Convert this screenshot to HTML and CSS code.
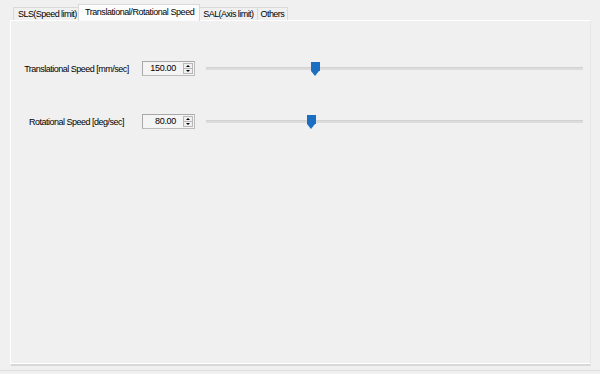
FILE: index.html
```html
<!DOCTYPE html>
<html>
<head>
<meta charset="utf-8">
<link rel="stylesheet" href="styles.css">
</head>
<body>
<div class="window">
  <div class="tabs">
    <div class="tab">SLS(Speed limit)</div>
    <div class="tab active">Translational/Rotational Speed</div>
    <div class="tab">SAL(Axis limit)</div>
    <div class="tab">Others</div>
  </div>
  <div class="panel">
    <div class="row">
      <div class="label">Translational Speed [mm/sec]</div>
      <div class="spin">
        <div class="value">150.00</div>
        <div class="btns"><span class="up"></span><span class="down"></span></div>
      </div>
      <div class="slider">
        <div class="track"></div>
        <div class="thumb" style="left: 105px"></div>
      </div>
    </div>
    <div class="row">
      <div class="label">Rotational Speed [deg/sec]</div>
      <div class="spin">
        <div class="value">80.00</div>
        <div class="btns"><span class="up"></span><span class="down"></span></div>
      </div>
      <div class="slider">
        <div class="track"></div>
        <div class="thumb" style="left: 101px"></div>
      </div>
    </div>
  </div>
</div>
<div class="statusline"></div>
</body>
</html>
```
FILE: styles.css
```css
html, body {
  margin: 0;
  padding: 0;
  background: #f0f0f0;
  font-family: "Liberation Sans", Arial, sans-serif;
  font-size: 9px;
  color: #000;
}
.window {
  width: 600px;
  height: 370px;
  padding-left: 10px;
  padding-right: 9px;
  box-sizing: border-box;
  display: flex;
  flex-direction: column;
}
.tabs {
  display: flex;
  align-items: flex-end;
  height: 20px;
  padding-left: 3px;
}
.tab {
  height: 12px;
  line-height: 12px;
  padding: 0 3px;
  border: 1px solid #d9d9d9;
  border-bottom: none;
  margin-right: -1px;
  letter-spacing: -0.55px;
  background: #f0f0f0;
  white-space: nowrap;
}
.tab.active {
  height: 16px;
  line-height: 14px;
  padding: 0 5px 0 6px;
  margin: 0 -1px -1px -1px;
  letter-spacing: -0.45px;
  background: #fcfcfc;
  position: relative;
  z-index: 1;
}
.tab:first-child { width: 57px; padding: 0 4px; }
.panel {
  height: 346px;
  box-sizing: border-box;
  border-top: 1px solid #fff;
  border-left: 1px solid #fff;
  border-right: 1px solid #e6e6e6;
  border-bottom: 2px solid #d8d8d8;
  box-shadow: inset 0 -1px 0 #fff;
  padding: 40px 7px 0 13px;
  display: flex;
  flex-direction: column;
  gap: 38px;
}
.row {
  display: flex;
  align-items: center;
  height: 15px;
}
.label {
  width: 105px;
  text-align: center;
  letter-spacing: -0.5px;
  white-space: nowrap;
}
.spin {
  margin-left: 13px;
  width: 53px;
  height: 15px;
  box-sizing: border-box;
  border: 1px solid #a8a8a8;
  border-right-color: #bcbcbc;
  border-bottom-color: #bcbcbc;
  background: #f4f4f4;
  display: flex;
}
.value {
  flex: 1;
  text-align: right;
  padding-right: 7px;
  line-height: 13px;
  letter-spacing: -0.3px;
}
.btns {
  width: 10px;
  margin: 1px 1px 1px 0;
  border: 1px solid #b8b8b8;
  box-sizing: border-box;
  display: flex;
  flex-direction: column;
  background: #f0f0f0;
}
.btns span {
  flex: 1;
  display: flex;
  align-items: center;
  justify-content: center;
}
.btns .up { border-bottom: 1px solid #b8b8b8; }
.btns .up::after {
  content: "";
  border-left: 2px solid transparent;
  border-right: 2px solid transparent;
  border-bottom: 2px solid #000;
}
.btns .down::after {
  content: "";
  border-left: 2px solid transparent;
  border-right: 2px solid transparent;
  border-top: 2px solid #000;
}
.slider {
  margin-left: 11px;
  flex: 1;
  height: 15px;
  position: relative;
  display: flex;
  align-items: center;
}
.track {
  flex: 1;
  height: 3px;
  background: #dcdcdc;
  border-top: 1px solid #d2d2d2;
  box-sizing: border-box;
}
.thumb {
  position: absolute;
  top: 1px;
  width: 9px;
  height: 14px;
}
.thumb::before {
  content: "";
  position: absolute;
  left: 0;
  top: 0;
  width: 9px;
  height: 9px;
  background: #1a6fc2;
}
.thumb::after {
  content: "";
  position: absolute;
  left: 0;
  top: 9px;
  border-left: 4.5px solid transparent;
  border-right: 4.5px solid transparent;
  border-top: 5px solid #1a6fc2;
}
.statusline {
  height: 1px;
  background: #dedede;
}
```
